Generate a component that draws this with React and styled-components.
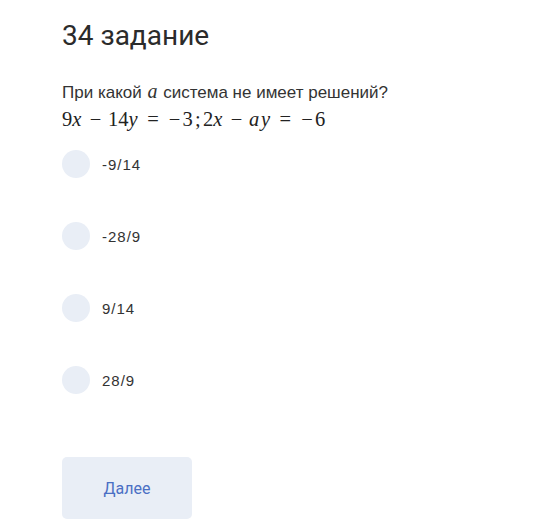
import React from "react"
import styled, { createGlobalStyle } from "styled-components"

const GlobalStyle = createGlobalStyle`
  body {
    margin: 0;
    background: #fff;
    font-family: Roboto, "Noto Sans", sans-serif;
    color: #333;
  }
`

const Page = styled.div`
  padding: 18px 0 0 62px;
`

const Title = styled.h1`
  margin: 0;
  font-size: 28px;
  line-height: 36px;
  font-weight: 400;
  color: #2b2b2b;
`

const Question = styled.p`
  margin: 27px 0 0;
  font-family: "Liberation Sans", Arial, sans-serif;
  font-size: 17px;
  line-height: 20px;
  color: #333;
`

const Var = styled.i`
  font-family: "Liberation Serif", serif;
  font-size: 20px;
  margin: 0 1px;
`

const Formula = styled.div`
  margin-top: 4px;
  font-family: "Liberation Serif", "DejaVu Serif", serif;
  font-size: 20.5px;
  line-height: 24px;
  color: #222;
  white-space: nowrap;
`

const Sym = styled.i`
  font-style: italic;
  margin-right: 0.08em;
`

// binary / relation operators, sized like KaTeX glyphs
const Op = styled.span`
  display: inline-block;
  width: ${({ $w }) => $w || 0.778}em;
  text-align: center;
  margin: 0 ${({ $space }) => $space}em;
`

const Options = styled.div`
  display: flex;
  flex-direction: column;
  gap: 44px;
  margin-top: 19px;
`

const Option = styled.label`
  display: flex;
  align-items: center;
  gap: 12px;
  height: 28px;
  font-family: "Liberation Sans", Arial, sans-serif;
  font-size: 15px;
  letter-spacing: 1px;
  color: #333;
  cursor: pointer;
`

const Radio = styled.span`
  width: 28px;
  height: 28px;
  border-radius: 50%;
  background: #e9eef6;
  flex-shrink: 0;
`

const NextButton = styled.button`
  margin-top: 63px;
  width: 130px;
  height: 62px;
  border: none;
  border-radius: 5px;
  background: #e9eef6;
  color: #4a6fc4;
  font-family: Roboto, "Noto Sans", sans-serif;
  font-size: 16px;
  cursor: pointer;
`

const answers = ["-9/14", "-28/9", "9/14", "28/9"]

export default function App() {
  return (
    <Page>
      <GlobalStyle />
      <Title>34 задание</Title>
      <Question>
        При какой <Var>a</Var> система не имеет решений?
      </Question>
      <Formula>
        9<Sym>x</Sym>
        <Op $space={0.222}>−</Op>
        14<Sym>y</Sym>
        <Op $space={0.278}>=</Op>
        <Op $space={0}>−</Op>3<Op $space={0} $w={0.5}>;</Op>
        2<Sym>x</Sym>
        <Op $space={0.222}>−</Op>
        <Sym>a</Sym>
        <Sym>y</Sym>
        <Op $space={0.278}>=</Op>
        <Op $space={0}>−</Op>6
      </Formula>
      <Options>
        {answers.map(a => (
          <Option key={a}>
            <Radio />
            {a}
          </Option>
        ))}
      </Options>
      <NextButton>Далее</NextButton>
    </Page>
  )
}
